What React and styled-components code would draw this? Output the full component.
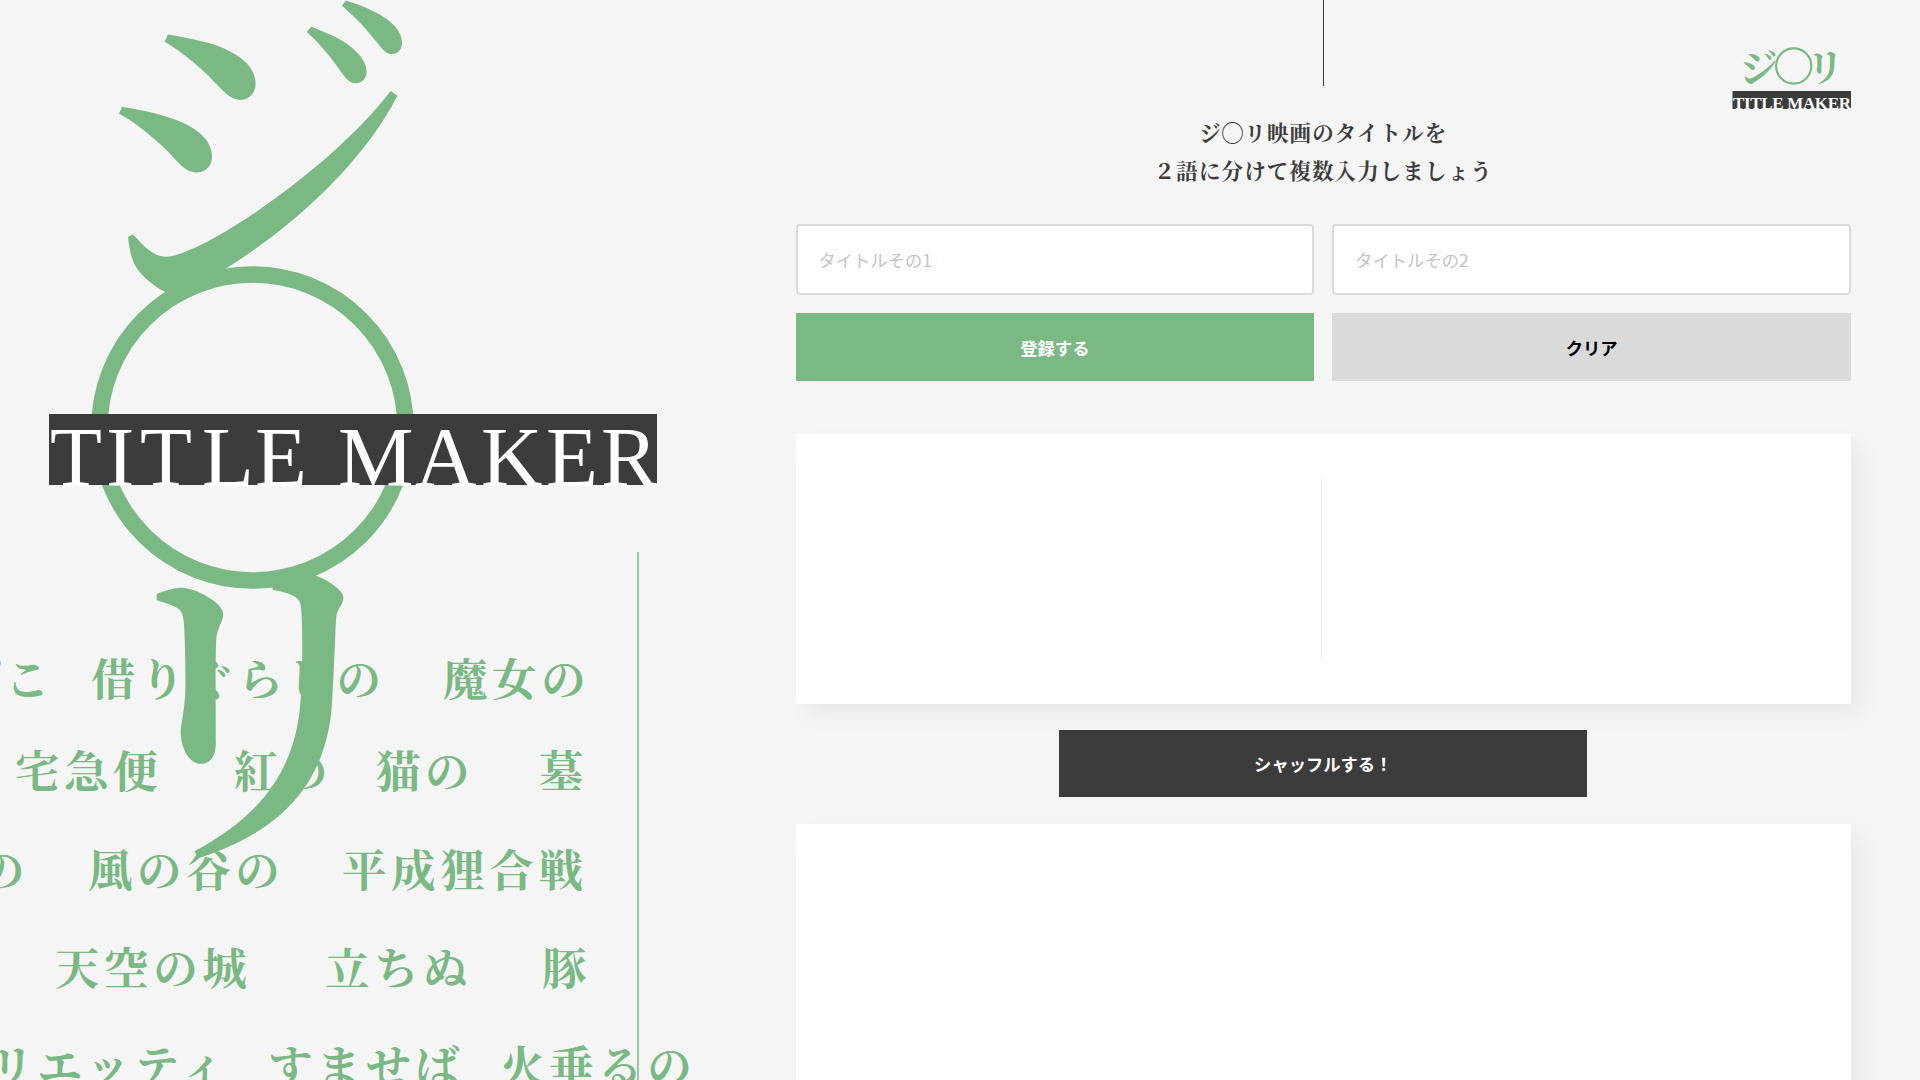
import React from "react";
import styled, { createGlobalStyle } from "styled-components";

const GREEN = "#7ab884";
const INK = "#3c3c3c";
const SERIF = `"Noto Serif CJK JP", "Noto Serif JP", "Source Han Serif JP", "Liberation Serif", "Noto Sans CJK JP", serif`;
const SANS = `"Noto Sans CJK JP", sans-serif`;

const Global = createGlobalStyle`
  *, *::before, *::after { box-sizing: border-box; }
  body { margin: 0; background: #f5f5f5; color: ${INK}; font-family: ${SANS}; }
`;

const Page = styled.div`
  position: relative;
  display: grid;
  grid-template-columns: 795.5px 1055.5px;
  height: 1080px;
  overflow: hidden;
`;

const Visual = styled.aside`
  position: relative;
  height: 1080px;
  padding-top: 628px;
`;

const VisualLine = styled.span`
  position: absolute;
  left: 637px;
  top: 552px;
  bottom: 0;
  width: 2px;
  background: ${GREEN};
  opacity: 0.75;
`;

const HeroLogo = styled.svg`
  position: absolute;
  left: 0;
  top: 0;
  width: 796px;
  height: 1080px;
`;

const WordRow = styled.div`
  display: flex;
  height: ${(p) => p.$h}px;
  margin-left: ${(p) => p.$start}px;
  line-height: 98px;
  font-family: ${SERIF};
  font-weight: 700;
  font-size: 44.5px;
  letter-spacing: 4.6px;
  color: ${GREEN};
  white-space: nowrap;
`;

const Word = styled.span`
  flex: none;
  width: ${(p) => p.$w}px;
`;

const Main = styled.main`
  display: flex;
  flex-direction: column;
  align-items: center;
`;

const TopLine = styled.div`
  width: 1px;
  height: 86px;
  background: ${INK};
`;

const Lead = styled.h1`
  margin: 27px 0 35px;
  font-family: ${SERIF};
  font-weight: 700;
  font-size: 21.5px;
  line-height: 38px;
  letter-spacing: 1.1px;
  text-align: center;
`;

const Form = styled.form`
  display: grid;
  grid-template-columns: 1fr 1fr;
  grid-template-rows: 71px 68px;
  gap: 18px;
  width: 100%;
`;

const Field = styled.input`
  min-width: 0;
  padding: 0 21px;
  border: 2px solid #dadada;
  border-radius: 4px;
  background: #fff;
  font: 400 17.3px ${SANS};
  &::placeholder { color: #c4c4c4; opacity: 1; }
`;

const Button = styled.button`
  border: 0;
  padding: 0;
  background: ${(p) => p.$bg};
  color: ${(p) => p.$fg};
  font: 700 17.3px ${SANS};
`;

const Shuffle = styled(Button)`
  width: 528px;
  height: 67px;
  margin: 26px 0 27px;
  flex: none;
`;

const Panel = styled.section`
  display: flex;
  justify-content: center;
  align-items: center;
  flex: none;
  width: 100%;
  height: ${(p) => p.$h}px;
  margin-top: ${(p) => p.$top}px;
  background: #fff;
  box-shadow: 11px 11px 22px rgba(0, 0, 0, 0.05);
`;

const Divider = styled.span`
  width: 1px;
  height: 182px;
  margin-right: 3px;
  background: #eee;
`;

const CornerLogo = styled.svg`
  position: absolute;
  left: 1730px;
  top: 40px;
  width: 124px;
  height: 72px;
`;

const rows = [
  { start: -142, h: 92, words: [["ぽんぽこ", 233], ["借りぐらしの", 352], ["魔女の", 150]] },
  { start: 15, h: 99, words: [["宅急便", 219], ["紅の", 142], ["猫の", 163], ["墓", 60]] },
  { start: -69, h: 98, words: [["姫の", 157], ["風の谷の", 254], ["平成狸合戦", 260]] },
  { start: 55, h: 98, words: [["天空の城", 270], ["立ちぬ", 217], ["豚", 60]] },
  { start: -58, h: 99, words: [["アリエッティ", 326], ["すませば", 232], ["火垂るの", 200]] },
];

export default function App() {
  return (
    <Page>
      <Global />
      <Visual>
        {rows.map((r, i) => (
          <WordRow key={i} $start={r.start} $h={r.h}>
            {r.words.map(([text, w]) => (
              <Word key={text} $w={w}>{text}</Word>
            ))}
          </WordRow>
        ))}
        <VisualLine />
        <HeroLogo viewBox="0 0 796 1080">
          <g fill={GREEN} fontFamily={SERIF} fontSize="320" fontWeight="600">
            <text x="100" y="270" transform="matrix(1.097 0 0 1.111 -34.5 -12.3)">ジ</text>
            <text x="90" y="850" transform="matrix(1.095 0 0 1.081 -21.1 -82.4)">リ</text>
          </g>
          <circle cx="252.5" cy="427.5" r="153" fill="none" stroke={GREEN} strokeWidth="16.5" />
          <rect x="49" y="414" width="608" height="71" fill={INK} />
          <text
            y="486"
            x="50 106 140 202 255 300 338 415 481 546 601"
            fill="#fff"
            fontFamily={`"Liberation Serif", serif`}
            fontSize="85"
          >
            TITLE MAKER
          </text>
        </HeroLogo>
      </Visual>
      <Main>
        <TopLine />
        <Lead>
          ジ◯リ映画のタイトルを
          <br />
          ２語に分けて複数入力しましょう
        </Lead>
        <Form onSubmit={(e) => e.preventDefault()}>
          <Field placeholder="タイトルその1" />
          <Field placeholder="タイトルその2" />
          <Button type="button" $bg={GREEN} $fg="#fff">登録する</Button>
          <Button type="button" $bg="#dadada" $fg="#000">クリア</Button>
        </Form>
        <Panel $h={270} $top={53}>
          <Divider />
        </Panel>
        <Shuffle type="button" $bg={INK} $fg="#fff">シャッフルする！</Shuffle>
        <Panel $h={400} $top={0} />
      </Main>
      <CornerLogo viewBox="1730 40 124 72">
        <g fill={GREEN} fontFamily={SERIF} fontWeight="700" fontSize="38">
          <text x="1739" y="81.5" fontSize="39">ジ</text>
          <text x="1806" y="81">リ</text>
        </g>
        <circle cx="1793.7" cy="66" r="17.6" fill="none" stroke={GREEN} strokeWidth="2.1" />
        <rect x="1732.5" y="91" width="118.5" height="18" fill={INK} />
        <text
          x="1733"
          y="108.5"
          textLength="118"
          fill="#fff"
          fontFamily={`"Liberation Serif", serif`}
          fontWeight="700"
          fontSize="17"
        >
          TITLE MAKER
        </text>
      </CornerLogo>
    </Page>
  );
}
